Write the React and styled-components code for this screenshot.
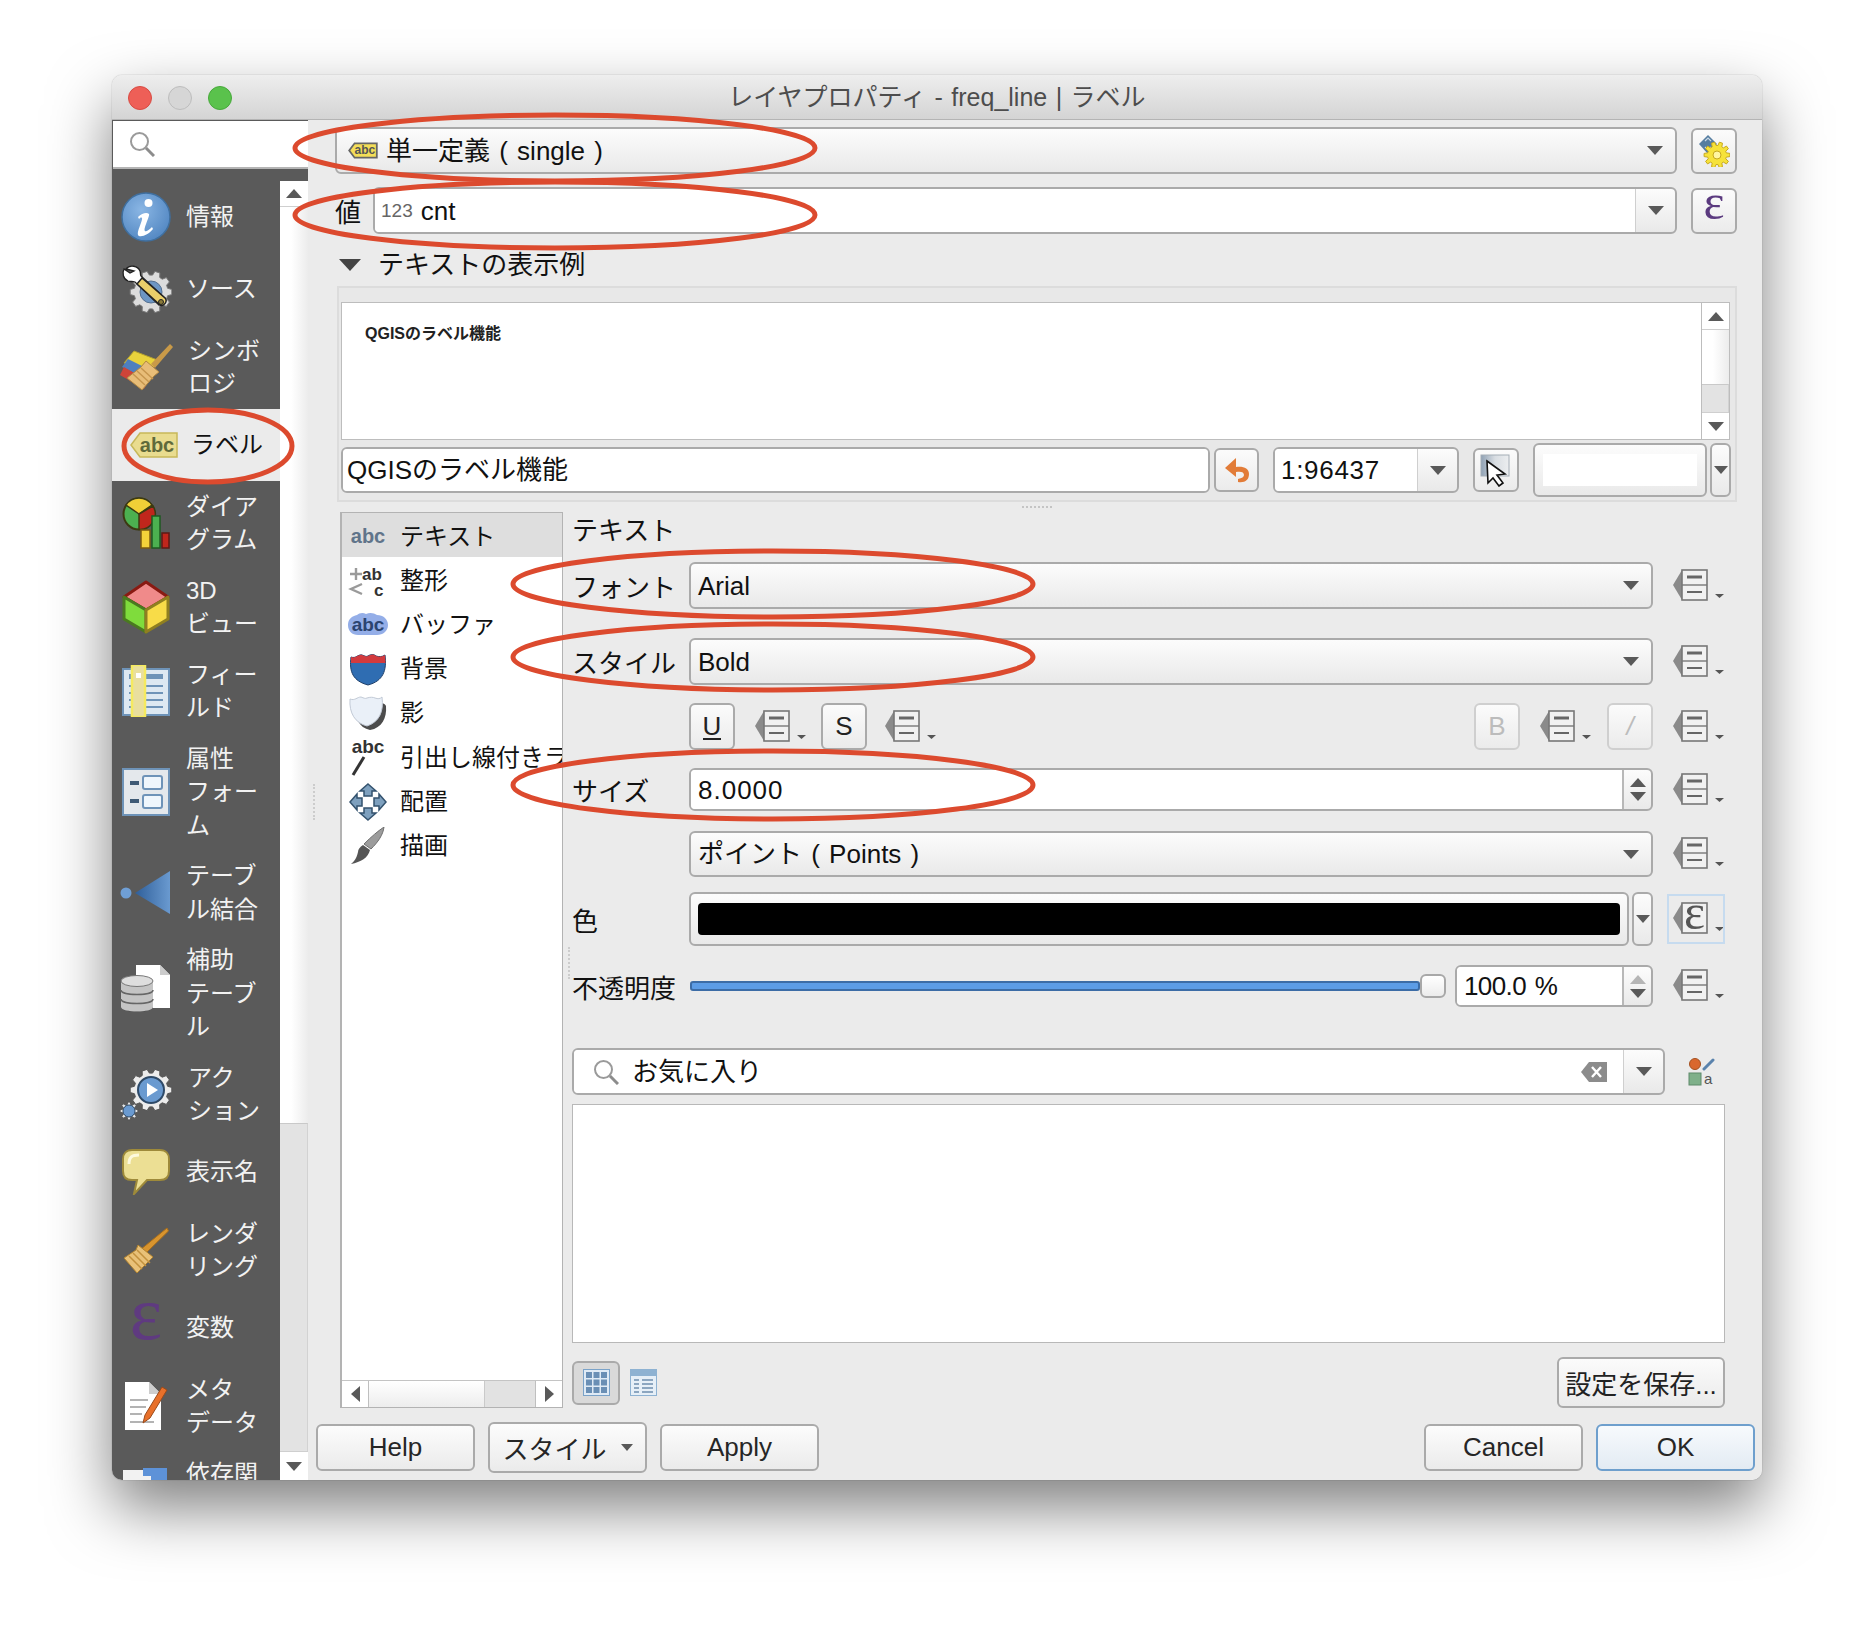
import React from "react"
import styled, { createGlobalStyle } from "styled-components"

const GlobalStyle = createGlobalStyle`
html, body { margin: 0; padding: 0; background: #fff; }
body { font-family: "Liberation Sans", "Noto Sans CJK JP", sans-serif; color: #111; }
* { box-sizing: border-box; }
`

const Page = styled.div`
width: 1874px;
height: 1628px;
padding: 75px 0 0 112px;
overflow: hidden;
background: #fff;
`
const Win = styled.div`
position: relative;
width: 1650px;
height: 1405px;
display: flex;
flex-direction: column;
border-radius: 10px;
overflow: hidden;
background: #ebebeb;
`
const WinShadow = styled.div`
width: 1650px;
height: 1405px;
border-radius: 10px;
box-shadow: 0 28px 62px rgba(0,0,0,.5), 0 0 1px rgba(0,0,0,.5);
`
const TitleBar = styled.div`
position: relative;
flex: 0 0 44px;
display: flex;
align-items: center;
justify-content: center;
background: linear-gradient(#eeeeee, #d4d4d4);
border-bottom: 1px solid #b4b4b4;
font-size: 25px;
line-height: 44px;
word-spacing: 1.5px;
color: #4d4d4d;
`
const Lights = styled.div`
position: absolute;
left: 16px;
top: 11px;
display: flex;
gap: 16px;
`
const Light = styled.span`
width: 24px;
height: 24px;
border-radius: 50%;
background: ${p => p.$c};
border: 1px solid ${p => p.$b};
`
const Body = styled.div`
flex: 1;
display: flex;
min-height: 0;
`

/* left side */
const Side = styled.div`
flex: 0 0 196px;
display: flex;
flex-direction: column;
background: #5a5a5a;
`
const SearchBox = styled.div`
flex: 0 0 48px;
margin: 1px 0 0 1px;
padding-left: 16px;
display: flex;
align-items: center;
background: #fff;
border-bottom: 2px solid #b4b4b4;
`
const SideBody = styled.div`
flex: 1;
display: flex;
margin-top: 12px;
min-height: 0;
`
const NavList = styled.div`
flex: 0 0 168px;
overflow: hidden;
`
const NavItem = styled.div`
display: flex;
align-items: center;
min-height: 72px;
padding: 8.5px 0 8.5px ${p => p.$active ? 16 : 8}px;
background: ${p => p.$active ? "#ebebeb" : "transparent"};
color: ${p => p.$active ? "#111" : "#f2f2f2"};
font-size: 24px;
line-height: 33.5px;
`
const NavIcon = styled.div`
flex: 0 0 52px;
height: 52px;
display: flex;
align-items: center;
justify-content: center;
margin-right: ${p => p.$active ? 11 : 14}px;
`
const NavLine = styled.div`
white-space: nowrap;
`
const VScroll = styled.div`
flex: 0 0 28px;
display: flex;
flex-direction: column;
background: linear-gradient(90deg, #fff 40%, #ececec);
border-left: ${p => p.$line ? "1px solid #bdbdbd" : "none"};
`
const ScrollBtn = styled.div`
flex: 0 0 ${p => p.$h}px;
display: flex;
align-items: center;
justify-content: center;
background: #fff;
border-${p => p.$end ? "top" : "bottom"}: 1px solid #cfcfcf;
`
const ScrollGap = styled.div`
flex: ${p => p.$grow};
`
const ScrollThumb = styled.div`
flex: 0 0 ${p => p.$h}px;
background: #e3e3e3;
border-top: 1px solid #c9c9c9;
border-right: 1px solid #d2d2d2;
`

/* right side */
const Main = styled.div`
flex: 1;
display: flex;
flex-direction: column;
min-width: 0;
position: relative;
`
const TopRow = styled.div`
display: flex;
align-items: center;
gap: 14px;
margin: ${p => p.$top}px 25px 0 27px;
font-size: 26px;
`
const Control = styled.div`
display: flex;
align-items: center;
flex: ${p => p.$flex || "1"};
min-width: 0;
height: ${p => p.$h || 47}px;
padding-left: ${p => p.$pad || 0}px;
margin-left: ${p => p.$gap || 0}px;
border: 2px solid #aaaaaa;
border-radius: 6px;
background: linear-gradient(#fcfcfc, #e9e9e9);
font-size: 26px;
line-height: 34px;
word-spacing: 2px;
color: #111;
white-space: nowrap;
overflow: hidden;
`
const ComboText = styled.span`
margin-left: 8px;
`
const EditPart = styled.div`
flex: 1;
align-self: stretch;
display: flex;
align-items: center;
min-width: 0;
padding-left: ${p => p.$pad || 6}px;
letter-spacing: ${p => p.$ls || 0}px;
background: #fff;
`
const ColorInner = styled.div`
flex: 0 0 154px;
height: 32px;
background: #fff;
`
const DropPart = styled.div`
flex: 0 0 ${p => p.$w || 40}px;
align-self: stretch;
display: flex;
align-items: center;
justify-content: center;
border-left: 1px solid #cfcfcf;
`
const SpinPart = styled(DropPart)`
flex-direction: column;
gap: 5px;
border-left: 2px solid #b8b8b8;
`
const Caret = styled.span`
display: block;
flex: none;
width: 0;
height: 0;
border-left: ${p => p.$s || 8}px solid transparent;
border-right: ${p => p.$s || 8}px solid transparent;
${p => p.$up ? "border-bottom" : "border-top"}: ${p => (p.$s || 8) + 1}px solid ${p => p.$c || "#595959"};
margin-left: ${p => p.$auto ? "auto" : p.$center ? "auto" : 0};
margin-right: ${p => p.$center ? "auto" : (p.$auto || 0) + "px"};
`
const SideCaret = styled.span`
display: block;
width: 0;
height: 0;
border-top: 8px solid transparent;
border-bottom: 8px solid transparent;
${p => p.$right ? "border-left" : "border-right"}: 9px solid #595959;
`
const SquareBtn = styled.div`
flex: 0 0 ${p => p.$w || 46}px;
height: ${p => p.$h || 46}px;
display: flex;
align-items: center;
justify-content: center;
margin-left: ${p => p.$push ? "auto" : (p.$gap || 0) + "px"};
border: 2px solid ${p => p.$dim ? "#cfcfcf" : "#aaaaaa"};
border-radius: 6px;
background: ${p => p.$on ? "#d9d9d9" : "linear-gradient(#fbfbfb, #ebebeb)"};
font-size: 26px;
color: ${p => p.$dim ? "#bcbcbc" : "#222"};
`
const FieldLabel = styled.div`
flex: 0 0 ${p => p.$w}px;
margin-right: -14px;
font-size: 26px;
`
const HeaderRow = styled.div`
display: flex;
align-items: center;
height: 30px;
margin: 16px 0 0 31px;
font-size: 26px;
line-height: 30px;
gap: 17px;
`
const PreviewGroup = styled.div`
margin: 6px 25px 0 29px;
height: 216px;
padding: 14px 5px 0 2px;
border: 2px solid #dcdcdc;
background: #e8e8e8;
`
const PreviewPane = styled.div`
height: 138px;
display: flex;
background: #fff;
border: 1px solid #bdbdbd;
`
const PreviewText = styled.div`
flex: 1;
padding: 21px 0 0 23px;
font-size: 16px;
line-height: 20px;
font-weight: 700;
color: #222;
`
const PreviewInputs = styled.div`
display: flex;
align-items: center;
gap: 14px;
margin-top: 3px;
height: 54px;
`
const ColorBtnRow = styled.div`
display: flex;
align-items: center;
gap: 3px;
height: 54px;
`
const SplitDots = styled.div`
height: 10px;
display: flex;
justify-content: center;
align-items: center;
margin-left: 4px;
&::after {
  content: "";
  width: 30px;
  border-top: 2px dotted #c4c4c4;
}
`
const Lower = styled.div`
position: relative;
display: flex;
gap: 9px;
margin: 0 37px 0 32px;
height: 896px;
`
const VDots = styled.span`
position: absolute;
left: ${p => p.$x}px;
top: ${p => p.$y}px;
height: ${p => p.$h}px;
border-left: 2px dotted #cccccc;
`
const Tree = styled.div`
flex: 0 0 223px;
display: flex;
flex-direction: column;
background: #fff;
border: 1px solid #b3b3b3;
border-left-width: 2px;
overflow: hidden;
`
const TreeRows = styled.div`
flex: 1;
`
const TreeRow = styled.div`
display: flex;
align-items: center;
height: 44.2px;
padding: 3px 0 0 4px;
background: ${p => p.$active ? "#dedede" : "#fff"};
font-size: 24px;
line-height: 30px;
white-space: nowrap;
`
const TreeIcon = styled.div`
flex: 0 0 44px;
height: 40px;
margin-right: 10px;
display: flex;
align-items: center;
justify-content: center;
`
const HScroll = styled.div`
flex: 0 0 27px;
display: flex;
border-top: 1px solid #c4c4c4;
background: linear-gradient(#ffffff, #ededed);
`
const HBtn = styled.div`
flex: 0 0 27px;
display: flex;
align-items: center;
justify-content: center;
background: #fff;
border-${p => p.$end ? "left" : "right"}: 1px solid #bfbfbf;
`
const HGap = styled.div`
flex: 1;
`
const HThumb = styled.div`
flex: 0 0 51px;
background: #e2e2e2;
border-left: 1px solid #cacaca;
`
const Form = styled.div`
flex: 1;
min-width: 0;
display: flex;
flex-direction: column;
`
const FormTitle = styled.div`
height: 34px;
padding-top: 2px;
font-size: 26px;
line-height: 34px;
`
const FormRow = styled.div`
display: flex;
align-items: center;
margin-top: ${p => p.$top}px;
height: ${p => p.$h}px;
font-size: 26px;
`
const RowLabel = styled.div`
flex: 0 0 117px;
white-space: nowrap;
`
const RowBody = styled.div`
flex: 0 0 964px;
height: 100%;
display: flex;
align-items: center;
`
const RowSide = styled.div`
flex: 1;
display: flex;
justify-content: flex-end;
padding-right: ${p => p.$inset || 0}px;
`
const InlineDD = styled.span`
display: flex;
margin: 0 ${p => p.$r || 0}px 0 ${p => p.$l || 0}px;
`
const FocusBox = styled.div`
display: flex;
align-items: center;
justify-content: flex-end;
width: 58px;
height: 50px;
outline: 2px solid #c6dbef;
outline-offset: -2px;
`
const Swatch = styled.div`
flex: 1;
height: 32px;
margin: 0 7px;
background: #000;
border-radius: 4px;
`
const SliderTrack = styled.div`
flex: 1;
height: 10px;
margin-left: 1px;
background: #5c9ce6;
border: 2px solid #3c6ca6;
border-radius: 3px;
`
const SliderHandle = styled.div`
flex: 0 0 26px;
height: 24px;
margin-right: 9px;
border: 2px solid #a8a8a8;
border-radius: 6px;
background: linear-gradient(#ffffff, #ececec);
`
const Underlined = styled.span`
border-bottom: 2px solid #222;
line-height: 24px;
`
const SearchText = styled.span`
margin-left: 13px;
`
const ClearSlot = styled.span`
margin: 0 16px 0 auto;
display: flex;
`
const FavBox = styled.div`
margin-top: 9px;
height: 241px;
background: #fff;
border: 1px solid #b8b8b8;
`
const FormFooter = styled.div`
display: flex;
align-items: center;
gap: 10px;
margin-top: 14px;
height: 51px;
`
const SaveBtn = styled.div`
margin-left: auto;
width: 168px;
height: 51px;
display: flex;
align-items: center;
justify-content: center;
border: 2px solid #aaaaaa;
border-radius: 6px;
background: linear-gradient(#fbfbfb, #ebebeb);
font-size: 26px;
color: #222;
white-space: nowrap;
`
const ButtonBar = styled.div`
display: flex;
align-items: center;
height: 51px;
margin: 14px 7px 0 8px;
gap: 13px;
`
const Btn = styled.div`
flex: 0 0 159px;
height: ${p => p.$h || 47}px;
display: flex;
align-items: center;
justify-content: center;
gap: 14px;
border: 2px solid ${p => p.$primary ? "#6e9fcd" : "#aaaaaa"};
border-radius: 6px;
background: ${p => p.$primary ? "linear-gradient(#f7fafd, #e3ebf3)" : "linear-gradient(#fcfcfc, #ebebeb)"};
font-size: 26px;
color: #262626;
margin-left: ${p => p.$auto ? "auto" : 0};
white-space: nowrap;
`
const Annotations = styled.svg`
position: absolute;
left: 0;
top: 0;
pointer-events: none;
`
const ValueType = styled.span`
font-size: 19px;
color: #666;
margin-right: 8px;
`

/* drawn icons */
const gear = (cx, cy, r, R, n) => {
    let d = ""
    for (let i = 0; i < n; i++) {
        const a = (i / n) * Math.PI * 2
        const w = Math.PI / n / 2
        const pts = [[r, a - w * 1.4], [R, a - w * 0.8], [R, a + w * 0.8], [r, a + w * 1.4]]
        pts.forEach(([rad, t], k) => {
            d += `${i === 0 && k === 0 ? "M" : "L"}${(cx + rad * Math.cos(t)).toFixed(1)} ${(cy + rad * Math.sin(t)).toFixed(1)}`
        })
    }
    return d + "Z"
}

const SearchGlass = ({ size = 26 }) => (
    <svg width={size} height={size} viewBox="0 0 26 26">
        <circle cx="10.5" cy="10.5" r="8.5" fill="none" stroke="#9a9a9a" strokeWidth="2" />
        <path d="M17 17l8 8" stroke="#8c8c8c" strokeWidth="3" />
    </svg>
)
const InfoIcon = () => (
    <svg width="52" height="52" viewBox="0 0 52 52">
        <defs>
            <radialGradient id="infoG" cx=".4" cy=".35" r=".8"><stop offset="0" stopColor="#8ab6e4" /><stop offset="1" stopColor="#4a80bd" /></radialGradient>
        </defs>
        <circle cx="26" cy="26" r="24" fill="url(#infoG)" stroke="#3f6f9f" strokeWidth="1.5" />
        <circle cx="28.5" cy="12" r="4" fill="#fff" />
        <path d="M18 26c4-4 9-5 11-3 1 2-6 15-4 17 1 1 4-1 7-4l1 2c-4 5-10 8-14 7-4-2 4-15 3-18-1-1-2 0-3 1z" fill="#fff" />
    </svg>
)
const SourceIcon = () => (
    <svg width="52" height="52" viewBox="0 0 52 52">
        <path d={gear(31, 29, 17, 21, 10)} fill="#dcdcdc" stroke="#777" />
        <circle cx="31" cy="29" r="11" fill="#6d96c4" stroke="#55708f" />
        <path d="M6 6c4-5 12-3 14 2 1 3 0 4 1 5l24 22-6 7-24-23c-3-1-4 0-7-1-5-2-6-8-4-12l6 4 4-2z" fill="#fff" stroke="#222" strokeWidth="1.3" />
        <path d="M22 15l23 20c3 3-1 9-5 7L17 21z" fill="#eacf6a" stroke="#222" strokeWidth="1.5" />
        <circle cx="41" cy="39" r="2.5" fill="#8a7a3a" stroke="#222" />
    </svg>
)
const SymbolIcon = () => (
    <svg width="54" height="52" viewBox="0 0 54 52">
        <path d="M4 22l10-12 26 10-10 10z" fill="#e9d23c" stroke="#b29f30" />
        <path d="M2 26l6-8 24 12-6 8z" fill="#4e7fbf" />
        <path d="M0 34l4-8 24 14-4 8z" fill="#cf4438" />
        <path d="M50 3l3 3-18 21-4-4z" fill="#c99a48" />
        <path d="M26 20l13 11-5 4-12 14-15-12 14-11z" fill="#e8bd78" stroke="#b28842" />
        <path d="M13 33l12 11M17 30l12 11M21 27l12 11" stroke="#c6964e" strokeWidth="1.5" />
    </svg>
)
const TagIcon = ({ w = 50, h = 26, size = 20, fill = "#e9dc8f", line = "#c7b85a", color = "#5f6a3b" }) => (
    <svg width={w} height={h} viewBox="0 0 50 26">
        <path d="M11 1H48V25H11L2 13z" fill={fill} stroke={line} strokeWidth={h < 20 ? 3 : 1.5} />
        <text x="28" y="19.5" textAnchor="middle" fontSize={size} fontWeight="700" fontFamily="Liberation Sans, sans-serif" fill={color}>abc</text>
    </svg>
)
const DiagramIcon = () => (
    <svg width="48" height="52" viewBox="0 0 48 52">
        <circle cx="17" cy="17" r="15.5" fill="#4cb050" stroke="#3c3a12" strokeWidth="2" />
        <path d="M17 17L4 8A15.5 15.5 0 0 1 30 8z" fill="#f0cf37" stroke="#3c3a12" strokeWidth="1.5" />
        <path d="M17 17L31 9A15.5 15.5 0 0 1 17 32.5z" fill="#c0261c" stroke="#3c3a12" strokeWidth="1.5" />
        <rect x="19" y="33" width="9" height="18" fill="#f3d23a" stroke="#7a5a10" strokeWidth="1.5" />
        <rect x="30" y="19" width="8" height="32" fill="#4cb050" stroke="#1e5a20" strokeWidth="1.5" />
        <rect x="40" y="36" width="7" height="15" fill="#c0261c" stroke="#5e1a14" strokeWidth="1.5" />
    </svg>
)
const CubeIcon = () => (
    <svg width="50" height="54" viewBox="0 0 50 54">
        <path d="M25 2L47 17 25 30 3 17z" fill="#f08a8a" stroke="#8a1a12" strokeWidth="3" strokeLinejoin="round" />
        <path d="M3 17L25 30V52L3 39z" fill="#7fdc3c" stroke="#4a7a20" strokeWidth="3" strokeLinejoin="round" />
        <path d="M47 17L25 30V52L47 39z" fill="#f8dc48" stroke="#8f7f20" strokeWidth="3" strokeLinejoin="round" />
    </svg>
)
const FieldsIcon = () => (
    <svg width="48" height="52" viewBox="0 0 48 52">
        <rect x="1" y="4" width="46" height="46" fill="#dde8f2" stroke="#6e93b8" strokeWidth="2" />
        <rect x="7" y="9" width="34" height="5" fill="#6e93b8" />
        <path d="M7 21h34M7 28h34M7 35h34M7 42h34" stroke="#6e93b8" strokeWidth="2" />
        <rect x="10" y="0" width="13" height="52" fill="#e9df9e" stroke="#f5ea60" strokeWidth="2.5" />
        <rect x="14" y="8" width="5" height="5" fill="#fff" />
    </svg>
)
const FormIcon = () => (
    <svg width="48" height="48" viewBox="0 0 48 48">
        <rect x="1" y="1" width="46" height="46" fill="#e4e8ec" stroke="#6e93b8" strokeWidth="2" />
        <rect x="8" y="13" width="9" height="4" fill="#3f5a75" />
        <rect x="8" y="31" width="9" height="4" fill="#3f5a75" />
        <rect x="21" y="8" width="19" height="13" rx="2" fill="#eff6fc" stroke="#6e93b8" strokeWidth="2" />
        <rect x="21" y="27" width="19" height="13" rx="2" fill="#eff6fc" stroke="#6e93b8" strokeWidth="2" />
    </svg>
)
const JoinIcon = () => (
    <svg width="52" height="44" viewBox="0 0 52 44">
        <defs>
            <linearGradient id="joinG" x1="0" x2="1"><stop offset="0" stopColor="#2f5f9a" /><stop offset="1" stopColor="#6a9ad0" /></linearGradient>
        </defs>
        <circle cx="6" cy="22" r="5.5" fill="#6f9fd6" />
        <path d="M50 0V43L15 22z" fill="url(#joinG)" />
    </svg>
)
const AuxIcon = () => (
    <svg width="52" height="56" viewBox="0 0 52 56">
        <path d="M16 0H40L50 10V43H16z" fill="#fff" />
        <path d="M40 0V10H50z" fill="#ccc" />
        <ellipse cx="17" cy="42" rx="16" ry="5" fill="#444" />
        <path d="M1 16V42c0 6 32 6 32 0V16z" fill="#c4c4c4" />
        <path d="M1 25c0 6 32 6 32 0M1 34c0 6 32 6 32 0" fill="none" stroke="#666" strokeWidth="1.5" />
        <ellipse cx="17" cy="16" rx="16" ry="5.5" fill="#dedede" stroke="#777" />
    </svg>
)
const ActionIcon = () => (
    <svg width="54" height="56" viewBox="0 0 54 56">
        <path d={gear(31, 24, 17, 21, 10)} fill="#ececec" stroke="#555" />
        <circle cx="31" cy="24" r="13" fill="#6a9ad0" stroke="#2e4a68" strokeWidth="2" />
        <path d="M27 17l11 7-11 7z" fill="#fff" />
        <path d={gear(9, 45, 6.5, 9, 8)} fill="#e4e4e4" stroke="#555" />
        <circle cx="9" cy="45" r="6" fill="#6a9ad0" stroke="#2e4a68" />
    </svg>
)
const BubbleIcon = () => (
    <svg width="48" height="46" viewBox="0 0 48 46">
        <path d="M10 1H38C44 1 47 5 47 10V22C47 28 44 31 38 31H25L12 45 15 31H10C4 31 1 28 1 22V10C1 5 4 1 10 1z" fill="#ecdf94" stroke="#9e8a3a" strokeWidth="2" />
        <path d="M7 15C7 8 10 6 17 6" fill="none" stroke="#fdf9dd" strokeWidth="3" />
    </svg>
)
const BroomIcon = () => (
    <svg width="46" height="48" viewBox="0 0 46 48">
        <path d="M44 2l1.5 3L22 28l-5-4z" fill="#d8942e" stroke="#a86e1c" />
        <path d="M15 19l15 12-4 4-12 12L1 32 13 24z" fill="#e9c178" stroke="#b0822f" />
        <path d="M6 30l13 13M10 27l13 13M14 24l13 13" stroke="#c2913e" strokeWidth="1.5" />
    </svg>
)
const Epsilon = ({ h = 30, color = "#5b3a7f", fs = 50 }) => (
    <svg width={h * 0.8} height={h} viewBox="0 0 24 30" overflow="visible">
        <text x="12" y="23" textAnchor="middle" fontSize={fs} fontFamily="Liberation Serif, serif" fill={color}>ε</text>
    </svg>
)
const MetaIcon = () => (
    <svg width="44" height="50" viewBox="0 0 44 50">
        <path d="M1 1H25L37 13V49H1z" fill="#fff" />
        <path d="M25 1V13H37z" fill="#cdcdcd" />
        <path d="M6 19H24M6 26H22M6 33H18M6 41H30" stroke="#9a9a9a" strokeWidth="1.5" />
        <path d="M38 6l5 3-17 28-7 5 2-8z" fill="#e8702a" stroke="#9a4a1a" />
    </svg>
)
const DependIcon = () => (
    <svg width="46" height="52" viewBox="0 0 46 52">
        <rect x="0" y="6" width="38" height="46" fill="#f2f2f2" />
        <path d="M28 4H44V40H28z" fill="#5d92d8" />
        <path d="M20 4H30V12H20z" fill="#5d92d8" />
    </svg>
)

const AbcPlain = ({ color = "#60748a" }) => (
    <svg width="44" height="24" viewBox="0 0 44 24">
        <text x="22" y="18" textAnchor="middle" fontSize="20" fontWeight="700" fontFamily="Liberation Sans, sans-serif" fill={color}>abc</text>
    </svg>
)
const FormatIcon = () => (
    <svg width="40" height="34" viewBox="0 0 40 34">
        <path d="M2 10h12M8 4v12M14 20l-11 5 11 5" fill="none" stroke="#9a9a9a" strokeWidth="2.4" />
        <text x="14" y="16" fontSize="17" fontWeight="700" fontFamily="Liberation Sans, sans-serif" fill="#333">ab</text>
        <text x="26" y="32" fontSize="17" fontWeight="700" fontFamily="Liberation Sans, sans-serif" fill="#333">c</text>
    </svg>
)
const BufferIcon = () => (
    <svg width="42" height="26" viewBox="0 0 42 26">
        <path d="M10 3c2-2 6-3 9-1 4-2 8-1 11 1 6 0 11 4 11 10s-5 10-11 10H11C5 23 1 19 1 13S5 4 10 3z" fill="#94aee8" />
        <text x="21" y="19" textAnchor="middle" fontSize="19" fontWeight="700" fontFamily="Liberation Sans, sans-serif" fill="#2c4470">abc</text>
    </svg>
)
const ShieldIcon = () => (
    <svg width="38" height="34" viewBox="0 0 38 34">
        <path d="M2 5c5 2 7-3 11-2 3 1 4 2 6 1 3-2 6-2 8 0 3 1 6 1 9-1 2 16-2 26-17 30C4 29 0 20 2 5z" fill="#2f6db2" stroke="#20406a" />
        <path d="M2 5c5 2 7-3 11-2 3 1 4 2 6 1 3-2 6-2 8 0 3 1 6 1 9-1l.5 8H2z" fill="#d23a3e" />
    </svg>
)
const ShadowIcon = () => (
    <svg width="38" height="36" viewBox="0 0 38 36">
        <path d="M6 8C10 9 13 6 17 7c4-2 8-2 13 1 5 0 6 1 7 3 1 12-4 22-16 24C10 33 5 22 6 8z" fill="#4c4c4c" />
        <path d="M1 4c5 2 7-2 11-2 3 1 4 2 6 1 3-1 6-1 8 0 3 1 5 1 7-1 2 15-3 25-15 29C6 28 0 18 1 4z" fill="#eaf0f8" stroke="#c2cad6" />
    </svg>
)
const CalloutIcon = () => (
    <svg width="44" height="38" viewBox="0 0 44 38">
        <text x="22" y="14" textAnchor="middle" fontSize="19" fontWeight="700" fontFamily="Liberation Sans, sans-serif" fill="#333">abc</text>
        <path d="M18 18L7 36" stroke="#333" strokeWidth="3" />
    </svg>
)
const MoveIcon = () => (
    <svg width="38" height="38" viewBox="0 0 38 38">
        <g fill="#7ea0be" stroke="#33526e" strokeWidth="1.5">
            <path d="M19 1l8 7h-4v5h-8V8h-4z" />
            <path d="M19 37l8-7h-4v-5h-8v5h-4z" />
            <path d="M1 19l7-8v4h5v8H8v4z" />
            <path d="M37 19l-7-8v4h-5v8h5v4z" />
        </g>
    </svg>
)
const BrushIcon = () => (
    <svg width="34" height="38" viewBox="0 0 34 38">
        <path d="M33 0c-1 8-6 15-13 22l-7-5C20 10 27 4 33 0z" fill="#9c9c9c" stroke="#6e6e6e" />
        <path d="M12 18l7 5c-2 8-9 12-19 14 5-4 6-8 7-12 0-3 2-5 5-7z" fill="#555" />
    </svg>
)
const DataDefined = ({ eps }) => (
    <svg width="53" height="34" viewBox="0 0 53 34" overflow="visible">
        <path d="M10 1L1 16l9 15z" fill="#8a8a8a" />
        <rect x="10" y="1" width="25" height="30" fill="#f1f1f1" stroke="#777" strokeWidth="1.6" />
        {eps ? (
            <text x="22.5" y="27" textAnchor="middle" fontSize="50" fontFamily="Liberation Serif, serif" fill="#555">ε</text>
        ) : (
            <>
                <path d="M10 16h25" stroke="#777" strokeWidth="1.4" />
                <path d="M15 8h15" stroke="#666" strokeWidth="3" />
                <path d="M15 23h15" stroke="#666" strokeWidth="2" />
            </>
        )}
        <path d="M43 25h9l-4.5 4z" fill="#555" />
    </svg>
)
const RuleGear = () => (
    <svg width="32" height="32" viewBox="0 0 32 32">
        <path d="M10 0l9 9-9 10-9-10z" fill="#557da0" />
        <path d="M7 6l3-3 3 3M7 12l3 3 3-3" fill="none" stroke="#c9d8e6" strokeWidth="1.2" />
        <path d={gear(19, 20, 9.5, 13, 10)} fill="#f6e23a" stroke="#c7a91e" />
        <circle cx="19" cy="20" r="4" fill="#fff6a0" stroke="#c7a91e" />
    </svg>
)
const UndoIcon = () => (
    <svg width="26" height="26" viewBox="0 0 26 26">
        <path d="M12 1L1 11l11 9v-5c5-1 8 0 8 3 0 2-2 3-6 4v3c7 1 11-2 11-8 0-6-6-8-13-7z" fill="#e27c38" />
    </svg>
)
const PickIcon = () => (
    <svg width="32" height="34" viewBox="0 0 32 34">
        <defs>
            <linearGradient id="pickG" x1="0" x2="1"><stop offset="0" stopColor="#8fa1b4" /><stop offset=".5" stopColor="#d8dde2" /><stop offset="1" stopColor="#eceef0" /></linearGradient>
        </defs>
        <rect x="1" y="2" width="28" height="21" fill="url(#pickG)" stroke="#a4adb6" />
        <path d="M7 8l18 13-8 1 6 8-4 3-6-8-5 5z" fill="#fff" stroke="#111" strokeWidth="1.6" />
    </svg>
)
const ClearIcon = () => (
    <svg width="26" height="20" viewBox="0 0 26 20">
        <path d="M8 0H26V20H8L0 10z" fill="#8c8c8c" />
        <path d="M11 5l9 10M20 5l-9 10" stroke="#fff" strokeWidth="2.4" />
    </svg>
)
const StyleMgrIcon = () => (
    <svg width="28" height="28" viewBox="0 0 28 28">
        <circle cx="7" cy="6" r="5.5" fill="#d9682e" stroke="#a4501f" />
        <rect x="1" y="15" width="12" height="12" fill="#7fb08a" stroke="#5f8a6a" />
        <path d="M16 11L25 2" stroke="#5a83ad" strokeWidth="3" strokeLinecap="round" />
        <text x="16" y="26" fontSize="15" fontFamily="Liberation Sans, sans-serif" fill="#555">a</text>
    </svg>
)
const GridIcon = () => (
    <svg width="27" height="27" viewBox="0 0 27 27">
        <rect x=".5" y=".5" width="26" height="26" fill="#dfeaf5" stroke="#7aa2c8" />
        {[3, 10.5, 18].map(y => [3, 10.5, 18].map(x => <rect key={`${x}-${y}`} x={x} y={y} width="6" height="6" fill="#6a8fb5" />))}
    </svg>
)
const ListIcon = () => (
    <svg width="27" height="27" viewBox="0 0 27 27">
        <rect x=".5" y=".5" width="26" height="26" fill="#e6eff7" stroke="#8eb2d2" />
        <rect x="1" y="1" width="25" height="6" fill="#8eb2d2" />
        <path d="M4 11h5M12 11h11M4 15h5M12 15h11M4 19h5M12 19h11M4 23h5M12 23h11" stroke="#6f8fae" strokeWidth="1.4" />
    </svg>
)

const navItems = [
    { lines: ["情報"], icon: <InfoIcon /> },
    { lines: ["ソース"], icon: <SourceIcon /> },
    { lines: ["シンボ", "ロジ"], icon: <SymbolIcon /> },
    { lines: ["ラベル"], icon: <TagIcon />, active: true },
    { lines: ["ダイア", "グラム"], icon: <DiagramIcon /> },
    { lines: ["3D", "ビュー"], icon: <CubeIcon /> },
    { lines: ["フィー", "ルド"], icon: <FieldsIcon /> },
    { lines: ["属性", "フォー", "ム"], icon: <FormIcon /> },
    { lines: ["テーブ", "ル結合"], icon: <JoinIcon /> },
    { lines: ["補助", "テーブ", "ル"], icon: <AuxIcon /> },
    { lines: ["アク", "ション"], icon: <ActionIcon /> },
    { lines: ["表示名"], icon: <BubbleIcon /> },
    { lines: ["レンダ", "リング"], icon: <BroomIcon /> },
    { lines: ["変数"], icon: <Epsilon h={42} fs={55} color="#5f3a80" /> },
    { lines: ["メタ", "データ"], icon: <MetaIcon /> },
    { lines: ["依存関", "係"], icon: <DependIcon /> },
]

const treeItems = [
    { text: "テキスト", icon: <AbcPlain />, active: true },
    { text: "整形", icon: <FormatIcon /> },
    { text: "バッファ", icon: <BufferIcon /> },
    { text: "背景", icon: <ShieldIcon /> },
    { text: "影", icon: <ShadowIcon /> },
    { text: "引出し線付きラベル", icon: <CalloutIcon /> },
    { text: "配置", icon: <MoveIcon /> },
    { text: "描画", icon: <BrushIcon /> },
]

const marks = [
    [443, 73, 260, 33],
    [443, 140, 260, 33],
    [96, 371, 84, 36],
    [661, 509, 260, 33],
    [661, 582, 260, 33],
    [661, 710, 260, 34],
]

const App = () => {
    return (
        <Page>
            <GlobalStyle />
            <WinShadow>
                <Win>
                    <TitleBar>
                        <Lights>
                            <Light $c="#ee5f57" $b="#d84b43" />
                            <Light $c="#d6d6d6" $b="#bdbdbd" />
                            <Light $c="#5ac24c" $b="#47a93b" />
                        </Lights>
                        レイヤプロパティ - freq_line | ラベル
                    </TitleBar>
                    <Body>
                        <Side>
                            <SearchBox><SearchGlass /></SearchBox>
                            <SideBody>
                                <NavList>
                                    {navItems.map(item => (
                                        <NavItem key={item.lines[0]} $active={item.active}>
                                            <NavIcon $active={item.active}>{item.icon}</NavIcon>
                                            <div>{item.lines.map(l => <NavLine key={l}>{l}</NavLine>)}</div>
                                        </NavItem>
                                    ))}
                                </NavList>
                                <VScroll>
                                    <ScrollBtn $h={26}><Caret $up $s={8} /></ScrollBtn>
                                    <ScrollGap $grow={917} />
                                    <ScrollThumb $h={328} />
                                    <ScrollBtn $h={29} $end><Caret $s={8} /></ScrollBtn>
                                </VScroll>
                            </SideBody>
                        </Side>
                        <Main>
                            <TopRow $top={7}>
                                <Control $pad={11}>
                                    <TagIcon w={30} h={17} size={20} fill="#f4de58" line="#666" color="#555" />
                                    <ComboText>単一定義 ( single )</ComboText>
                                    <Caret $auto={12} />
                                </Control>
                                <SquareBtn><RuleGear /></SquareBtn>
                            </TopRow>
                            <TopRow $top={13}>
                                <FieldLabel $w={38}>値</FieldLabel>
                                <Control>
                                    <EditPart $pad={6}>
                                        <ValueType>123</ValueType>cnt
                                    </EditPart>
                                    <DropPart><Caret /></DropPart>
                                </Control>
                                <SquareBtn><Epsilon /></SquareBtn>
                            </TopRow>
                            <HeaderRow>
                                <Caret $s={11} $c="#444" />
                                テキストの表示例
                            </HeaderRow>
                            <PreviewGroup>
                                <PreviewPane>
                                    <PreviewText>QGISのラベル機能</PreviewText>
                                    <VScroll $line>
                                        <ScrollBtn $h={27}><Caret $up /></ScrollBtn>
                                        <ScrollGap $grow={54} />
                                        <ScrollThumb $h={28} />
                                        <ScrollBtn $h={27} $end><Caret /></ScrollBtn>
                                    </VScroll>
                                </PreviewPane>
                                <PreviewInputs>
                                    <Control $flex="0 0 869px" $h={46}>
                                        <EditPart $pad={4}>QGISのラベル機能</EditPart>
                                    </Control>
                                    <SquareBtn $w={45} $h={44} $gap={-10}><UndoIcon /></SquareBtn>
                                    <Control $flex="0 0 186px" $h={46}>
                                        <EditPart $pad={6} $ls={0.7}>1:96437</EditPart>
                                        <DropPart><Caret /></DropPart>
                                    </Control>
                                    <SquareBtn $h={44}><PickIcon /></SquareBtn>
                                    <ColorBtnRow>
                                        <Control $flex="0 0 174px" $h={54} $pad={8}>
                                            <ColorInner />
                                        </Control>
                                        <Control $flex="0 0 21px" $h={54}><Caret $s={7} $center /></Control>
                                    </ColorBtnRow>
                                </PreviewInputs>
                            </PreviewGroup>
                            <SplitDots />
                            <Lower>
                                <VDots $x={-27} $y={272} $h={36} />
                                <VDots $x={228} $y={435} $h={32} />
                                <Tree>
                                    <TreeRows>
                                        {treeItems.map(item => (
                                            <TreeRow key={item.text} $active={item.active}>
                                                <TreeIcon>{item.icon}</TreeIcon>
                                                {item.text}
                                            </TreeRow>
                                        ))}
                                    </TreeRows>
                                    <HScroll>
                                        <HBtn><SideCaret /></HBtn>
                                        <HGap />
                                        <HThumb />
                                        <HBtn $end><SideCaret $right /></HBtn>
                                    </HScroll>
                                </Tree>
                                <Form>
                                    <FormTitle>テキスト</FormTitle>
                                    <FormRow $top={16} $h={47}>
                                        <RowLabel>フォント</RowLabel>
                                        <RowBody>
                                            <Control $pad={7}>Arial<Caret $auto={12} /></Control>
                                        </RowBody>
                                        <RowSide><DataDefined /></RowSide>
                                    </FormRow>
                                    <FormRow $top={29} $h={47}>
                                        <RowLabel>スタイル</RowLabel>
                                        <RowBody>
                                            <Control $pad={7}>Bold<Caret $auto={12} /></Control>
                                        </RowBody>
                                        <RowSide><DataDefined /></RowSide>
                                    </FormRow>
                                    <FormRow $top={18} $h={47}>
                                        <RowLabel />
                                        <RowBody>
                                            <SquareBtn $h={47}><Underlined>U</Underlined></SquareBtn>
                                            <InlineDD $l={19} $r={14}><DataDefined /></InlineDD>
                                            <SquareBtn $h={47}>S</SquareBtn>
                                            <InlineDD $l={17}><DataDefined /></InlineDD>
                                            <SquareBtn $h={47} $dim $push>B</SquareBtn>
                                            <InlineDD $l={19} $r={15}><DataDefined /></InlineDD>
                                            <SquareBtn $h={47} $dim><i>/</i></SquareBtn>
                                        </RowBody>
                                        <RowSide><DataDefined /></RowSide>
                                    </FormRow>
                                    <FormRow $top={18} $h={43}>
                                        <RowLabel>サイズ</RowLabel>
                                        <RowBody>
                                            <Control $h={43}>
                                                <EditPart $pad={7} $ls={1}>8.0000</EditPart>
                                                <SpinPart $w={29}><Caret $up /><Caret /></SpinPart>
                                            </Control>
                                        </RowBody>
                                        <RowSide><DataDefined /></RowSide>
                                    </FormRow>
                                    <FormRow $top={20} $h={46}>
                                        <RowLabel />
                                        <RowBody>
                                            <Control $pad={7} $h={46}>ポイント ( Points )<Caret $auto={12} /></Control>
                                        </RowBody>
                                        <RowSide><DataDefined /></RowSide>
                                    </FormRow>
                                    <FormRow $top={15} $h={54}>
                                        <RowLabel>色</RowLabel>
                                        <RowBody>
                                            <Control $h={54}><Swatch /></Control>
                                            <Control $flex="0 0 21px" $h={54} $gap={3}><Caret $s={7} $center /></Control>
                                        </RowBody>
                                        <RowSide><FocusBox><DataDefined eps /></FocusBox></RowSide>
                                    </FormRow>
                                    <FormRow $top={19} $h={42}>
                                        <RowLabel>不透明度</RowLabel>
                                        <RowBody>
                                            <SliderTrack />
                                            <SliderHandle />
                                            <Control $flex="0 0 198px" $h={42}>
                                                <EditPart $pad={7} $ls={-0.6}>100.0 %</EditPart>
                                                <SpinPart $w={29}><Caret $up $c="#b5b5b5" /><Caret /></SpinPart>
                                            </Control>
                                        </RowBody>
                                        <RowSide><DataDefined /></RowSide>
                                    </FormRow>
                                    <FormRow $top={41} $h={47}>
                                        <Control $flex="0 0 1093px">
                                            <EditPart $pad={19}>
                                                <SearchGlass />
                                                <SearchText>お気に入り</SearchText>
                                                <ClearSlot><ClearIcon /></ClearSlot>
                                            </EditPart>
                                            <DropPart><Caret /></DropPart>
                                        </Control>
                                        <RowSide $inset={9}><StyleMgrIcon /></RowSide>
                                    </FormRow>
                                    <FavBox />
                                    <FormFooter>
                                        <SquareBtn $w={48} $h={44} $on><GridIcon /></SquareBtn>
                                        <ListIcon />
                                        <SaveBtn>設定を保存...</SaveBtn>
                                    </FormFooter>
                                </Form>
                            </Lower>
                            <ButtonBar>
                                <Btn>Help</Btn>
                                <Btn $h={51}>スタイル<Caret $s={6} /></Btn>
                                <Btn>Apply</Btn>
                                <Btn $auto>Cancel</Btn>
                                <Btn $primary>OK</Btn>
                            </ButtonBar>
                        </Main>
                    </Body>
                    <Annotations width="1650" height="1405" viewBox="0 0 1650 1405">
                        {marks.map(([cx, cy, rx, ry]) => (
                            <ellipse key={`${cx}-${cy}`} cx={cx} cy={cy} rx={rx} ry={ry} fill="none" stroke="#dc4a2e" strokeWidth="5" />
                        ))}
                    </Annotations>
                </Win>
            </WinShadow>
        </Page>
    )
}

export default App
